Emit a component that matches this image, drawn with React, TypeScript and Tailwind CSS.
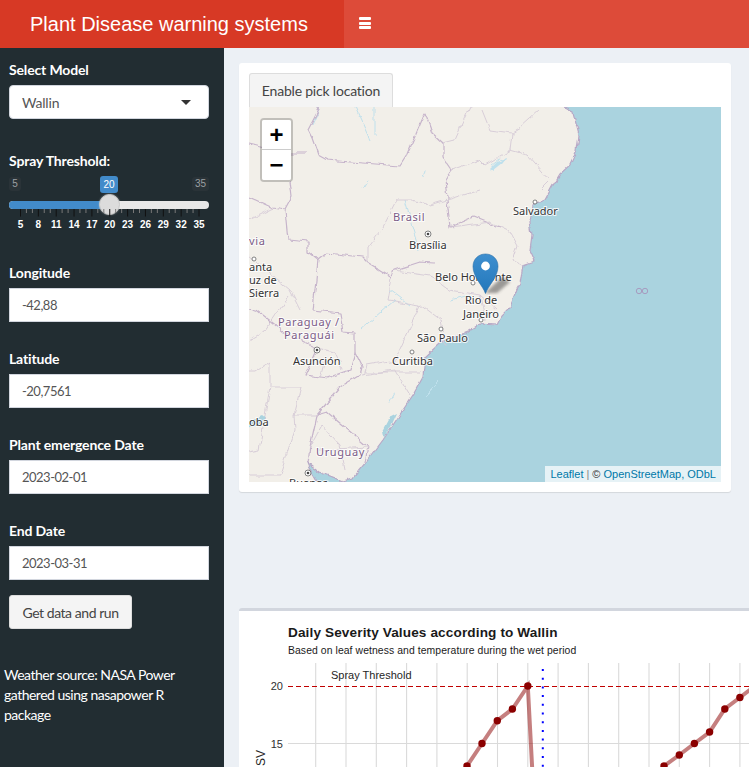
import { ReactNode } from 'react'

const FONT = "font-['Lato','Liberation_Sans',sans-serif]"

const ticks = [5, 8, 11, 14, 17, 20, 23, 26, 29, 32, 35]

function FieldLabel({ children }: { children: ReactNode }) {
  return <div className="h-5 text-[14px] leading-5 font-bold text-white tracking-[-0.15px]">{children}</div>
}

function TextField({ label, value }: { label: string; value: string }) {
  return (
    <div className="mb-[27px]">
      <FieldLabel>{label}</FieldLabel>
      <div className="mt-[5px] h-[34px] w-[200px] bg-white border border-[#d2d6de] px-3 text-[13px] leading-[32px] text-[#555] tracking-[-0.5px]">
        {value}
      </div>
    </div>
  )
}

function ThresholdSlider() {
  return (
    <div className="relative h-[74px] w-[200px] mt-[5px]">
      <span className="absolute left-0 top-[1px] h-[14px] w-3 rounded-[3px] bg-[#2a3338] text-center text-[#9a9fa2] text-[10px] leading-[14px] font-['Liberation_Sans',sans-serif]">5</span>
      <span className="absolute left-[91px] top-0 h-[17px] w-[18px] rounded-[3px] bg-[#428bca] text-white text-center text-[10px] leading-[17px] font-['Liberation_Sans',sans-serif]">20</span>
      <span className="absolute right-0 top-[1px] h-[14px] w-[17px] rounded-[3px] bg-[#2a3338] text-center text-[#9a9fa2] text-[10px] leading-[14px] font-['Liberation_Sans',sans-serif]">35</span>
      <div className="absolute left-0 top-[25px] h-2 w-full rounded-full bg-[#e8e8e8]" />
      <div className="absolute left-0 top-[25px] h-2 w-[100px] rounded-l-full bg-[#428bca]" />
      <div className="absolute left-[90px] top-[18px] h-[21px] w-[21px] rounded-full bg-[#dcdcdc] border border-[#c8c8c8] shadow-[0_0_2px_rgba(255,255,255,0.4)]" />
      <svg className="absolute left-0 top-[33px]" width="200" height="10" viewBox="0 0 200 10">
        {ticks.map((t, i) => {
          const x = 11.5 + i * 17.85
          return (
            <g key={t}>
              <rect x={x - 0.5} y="0" width="1" height="7.5" fill="#111" />
              {i < 10 && <rect x={x + 5.4} y="0" width="1" height="4" fill="#777" />}
              {i < 10 && <rect x={x + 11.4} y="0" width="1" height="4" fill="#777" />}
            </g>
          )
        })}
      </svg>
      <div className="absolute left-0 top-[43px] h-3 w-full">
        {ticks.map((t, i) => (
          <span
            key={t}
            className="absolute top-0 w-5 -ml-[10px] text-center text-[10px] leading-3 font-bold text-white font-['Liberation_Sans',sans-serif]"
            style={{ left: 11.5 + i * 17.85 }}
          >
            {t}
          </span>
        ))}
      </div>
    </div>
  )
}

function MapLabel({ x, y, children, purple }: { x: number; y: number; children: string; purple?: boolean }) {
  return (
    <text
      x={x}
      y={y}
      fontFamily="'Noto Sans', sans-serif"
      fontSize="11"
      letterSpacing={purple ? 0.6 : 0}
      fill={purple ? '#7b5c87' : '#333'}
      stroke="#fff"
      strokeOpacity="0.8"
      strokeWidth="2"
      paintOrder="stroke"
    >
      {children}
    </text>
  )
}

function City({ x, y, capital }: { x: number; y: number; capital?: boolean }) {
  return (
    <g>
      <circle cx={x} cy={y} r={capital ? 3 : 2} fill="#fff" stroke="#666" strokeWidth="0.8" />
      {capital && <circle cx={x} cy={y} r="1.3" fill="#444" />}
    </g>
  )
}

const COAST =
  'M563 107 L573 112 L579 135 L577 150 L570 165 L560 174 L552 187 L545 200 L533 205 L530 222 L532 235 L530 250 L535 261 L523 265 L520 285 L517 290 L510 307 L502 315 L497 325 L480 324 L467 332 L440 343 L425 357 L423 377 L413 395 L403 410 L383 440 L368 460 L353 478 L343 481 L320 472 L308 463 L310 468 L318 482'

function BrazilMap() {
  return (
    <svg className="block" width="472" height="375" viewBox="249 107 472 375">
      <defs>
        <filter id="wiggle" x="-5%" y="-5%" width="110%" height="110%">
          <feTurbulence type="fractalNoise" baseFrequency="0.09" numOctaves="3" seed="4" result="n" />
          <feDisplacementMap in="SourceGraphic" in2="n" scale="6" xChannelSelector="R" yChannelSelector="G" />
          <feGaussianBlur stdDeviation="0.3" />
        </filter>
        <filter id="soft">
          <feGaussianBlur stdDeviation="1.6" />
        </filter>
        <linearGradient id="pin" x1="0" y1="0" x2="0" y2="1">
          <stop offset="0" stopColor="#3f8fcf" />
          <stop offset="1" stopColor="#2277bb" />
        </linearGradient>
      </defs>
      <rect x="249" y="107" width="472" height="375" fill="#aad3df" />
      <g filter="url(#wiggle)">
        {/* land, run past the frame so the wiggle leaves no gap */}
        <path d={`M235 95 L563 95 ${COAST.slice(1)} L318 495 L235 495 Z`} fill="#f2efe9" />
        <path d={COAST} fill="none" stroke="#b7a8c6" strokeWidth="1.2" />
        {/* lakes and rivers */}
        <g fill="none" stroke="#bfe0ec" strokeWidth="1">
          <path d="M320 107 L312 125 M355 107 L370 140 M375 107 L375 135 M425 170 L423 178 M368 180 L362 190" />
          <path d="M491 165 L500 158 L507 160 M405 200 L420 250 M450 300 L470 295 M390 290 L410 305" />
          <path d="M395 392 L389 403 M250 426 L262 420 M360 330 L395 300 M440 380 L425 395" />
        </g>
        <path d="M490 168 L497 161 L506 158 L502 163 L493 170 Z" fill="#bfe0ec" />
        <path d="M384 438 L392 424 L397 413 L391 416 L383 431 Z" fill="#aad3df" />
        <path d="M245 422 L262 415 L266 418 L258 426 L245 428 Z" fill="#aad3df" />
        {/* country borders */}
        <g fill="none" stroke="#c6b4cb" strokeWidth="1.2" strokeLinejoin="round">
          <path d="M320 107 L308 130 L312 138 L318 155 L327 160 L400 166 L407 155 L425 113 L432 133 L443 143 L443 157 L452 170 L445 180 L447 200 L450 227 L473 217 L500 228" />
          <path d="M249 197 L273 208 L285 210 L288 240 L308 242 L308 252 L318 260 L327 253 L362 257 L368 263 L392 278 L395 270 L420 262 L435 263" />
          <path d="M290 180 L292 197 L285 210 M308 153 L290 153 M249 143 L290 153" />
          <path d="M258 312 L283 332 L317 348 L305 375 L328 378 L350 370 L355 353 L362 367 L360 375 L340 387 L317 415 L310 447 L308 463" />
          <path d="M317 415 L327 412 L340 423 L368 447 L365 462" />
          <path d="M313 310 L340 313 L343 332 L355 333 L355 353 M313 310 L318 260 M249 309 L258 312" />
        </g>
        {/* state borders */}
        <g fill="none" stroke="#d5cad6" strokeWidth="0.9" strokeLinejoin="round">
          <path d="M397 200 L383 227 L368 247 L368 263 M397 200 L413 200 L430 205 L447 200" />
          <path d="M249 220 L273 208 M482 110 L490 130 L512 133 L520 128 L540 110 M512 133 L510 150 L485 165 L480 160 M510 150 L528 155 L550 180 L540 190" />
          <path d="M450 227 L490 222 L510 232 L517 245 L512 260 L522 265 M452 170 L480 160 M480 190 L447 200 M470 107 L455 140 L443 143" />
          <path d="M392 278 L388 300 L420 305 L440 320 L445 345 M420 305 L395 360 L367 365 M367 365 L365 372 L420 372 M362 375 L395 370 L410 395 M395 270 L430 275 L450 290 L480 295 L497 310 M480 295 L485 320" />
          <path d="M270 362 L255 372 L249 372 M270 362 L270 387 L301 387 M270 387 L259 450 L249 452 M301 387 L294 415 L295 430 L280 475 L249 475 M294 415 L317 415" />
          <path d="M317 348 L335 352 L343 370 M325 360 L320 378 M322 425 L340 445 L345 470 M320 450 L368 447 M310 447 L322 425" />
          <path d="M249 255 L290 290 L300 310 M289 295 L265 330 L249 340" />
        </g>
      </g>
      <circle cx="639" cy="291" r="2.7" fill="none" stroke="#a79cc0" strokeWidth="1" />
      <circle cx="645" cy="291" r="2.7" fill="none" stroke="#a79cc0" strokeWidth="1" />
      {/* places */}
      <City x={428} y={234} capital />
      <City x={535} y={202} />
      <City x={473} y={283} />
      <City x={481} y={320} />
      <City x={441} y={329} />
      <City x={412} y={352} />
      <City x={317} y={350} capital />
      <City x={308} y={473} capital />
      <City x={254} y={259} />
      <MapLabel x={393} y={221} purple>Brasil</MapLabel>
      <MapLabel x={409} y={249}>Brasília</MapLabel>
      <MapLabel x={513} y={215}>Salvador</MapLabel>
      <MapLabel x={435} y={281}>Belo Horizonte</MapLabel>
      <MapLabel x={465} y={304}>Rio de</MapLabel>
      <MapLabel x={463} y={318}>Janeiro</MapLabel>
      <MapLabel x={417} y={342}>São Paulo</MapLabel>
      <MapLabel x={392} y={365}>Curitiba</MapLabel>
      <MapLabel x={293} y={365}>Asunción</MapLabel>
      <MapLabel x={278} y={326} purple>Paraguay /</MapLabel>
      <MapLabel x={284} y={339} purple>Paraguái</MapLabel>
      <MapLabel x={316} y={456} purple>Uruguay</MapLabel>
      <MapLabel x={249} y={245} purple>via</MapLabel>
      <MapLabel x={249} y={271}>anta</MapLabel>
      <MapLabel x={249} y={284}>uz de</MapLabel>
      <MapLabel x={249} y={297}>Sierra</MapLabel>
      <MapLabel x={249} y={426}>oba</MapLabel>
      <MapLabel x={289} y={487}>Buenos</MapLabel>
      {/* marker shadow */}
      <path d="M485 293 L502 277 L510 282 L497 293 Z" fill="#333" opacity="0.45" filter="url(#soft)" />
      {/* marker */}
      <path
        d="M485.5 293.5 C483 286 473 277 473 266.5 C473 259 478.5 254 485.5 254 C492.5 254 498 259 498 266.5 C498 277 488 286 485.5 293.5 Z"
        fill="url(#pin)"
        stroke="#2a6fa8"
        strokeWidth="0.6"
      />
      <circle cx="485.5" cy="266" r="4.4" fill="#fff" />
    </svg>
  )
}

function SeverityChart() {
  const gridX = [315.7, 346, 376.3, 406.6, 436.9, 467.2, 497.5, 527.8, 558.1, 588.4, 618.7, 649, 679.3, 709.6, 739.9]
  const left: [number, number][] = [[452, 790], [467, 766], [482, 743.5], [497.3, 720.7], [512.4, 709], [527.8, 686], [542.8, 968]]
  const right: [number, number][] = [[649, 790], [664, 766], [679.3, 755], [694.4, 743.5], [709.6, 732], [724.8, 709], [739.9, 697.5], [755, 686]]
  const toLine = (pts: [number, number][]) => pts.map(p => p.join(',')).join(' ')
  return (
    <svg className="block" width="510" height="156" viewBox="239 611 510 156">
      <g fontFamily="'Liberation Sans', sans-serif">
        <text x="288" y="637" fontSize="13.6" fontWeight="700" fill="#1a1a1a" letterSpacing="0.12">Daily Severity Values according to Wallin</text>
        <text x="288" y="654" fontSize="10.4" fill="#1a1a1a" letterSpacing="0.08">Based on leaf wetness and temperature during the wet period</text>
        {gridX.map(x => (
          <line key={x} x1={x} x2={x} y1="663" y2="767" stroke="#dadada" strokeWidth="1.1" />
        ))}
        <line x1="288" x2="749" y1="743.5" y2="743.5" stroke="#dadada" strokeWidth="1.1" />
        <text x="331" y="679" fontSize="11" fill="#262626">Spray Threshold</text>
        <text x="283" y="690" fontSize="11" fill="#303030" textAnchor="end">20</text>
        <text x="283" y="747.5" fontSize="11" fill="#303030" textAnchor="end">15</text>
        <text transform="translate(265 766) rotate(-90)" fontSize="12" fill="#262626">SV</text>
        <polyline points={toLine(left)} fill="none" stroke="#8b0000" strokeOpacity="0.5" strokeWidth="4" />
        <polyline points={toLine(right)} fill="none" stroke="#8b0000" strokeOpacity="0.5" strokeWidth="4" />
        <line x1="288" x2="749" y1="686.5" y2="686.5" stroke="#c00000" strokeWidth="1" strokeDasharray="5 3" />
        <line x1="542.8" x2="542.8" y1="669" y2="767" stroke="#0000ff" strokeWidth="2" strokeDasharray="2 6.7" />
        {left.concat(right).map(([x, y]) => (
          <circle key={`${x}-${y}`} cx={x} cy={y} r="3.7" fill="#8b0000" />
        ))}
      </g>
    </svg>
  )
}

export default function App() {
  return (
    <div className={`h-[767px] w-[749px] overflow-hidden bg-[#ecf0f5] ${FONT}`}>
      <header className="flex h-12">
        <div className="flex h-12 w-[344px] items-center bg-[#d73925] pl-[30px] text-[20px] text-white font-['Liberation_Sans',sans-serif]">
          Plant Disease warning systems
        </div>
        <div className="flex h-12 flex-1 items-center bg-[#dd4b39] pl-[15px]">
          <div className="mb-[2px] flex w-[12px] flex-col gap-[1.5px]">
            <span className="h-[3px] rounded-[1px] bg-white" />
            <span className="h-[3px] rounded-[1px] bg-white" />
            <span className="h-[3px] rounded-[1px] bg-white" />
          </div>
        </div>
      </header>

      <div className="flex h-[719px]">
        <aside className="w-[224px] shrink-0 bg-[#222d32] pl-[9px] pt-3">
          <FieldLabel>Select Model</FieldLabel>
          <div className="mt-[5px] flex h-[34px] w-[200px] items-center justify-between rounded-[4px] border border-[#d2d6de] bg-white pl-3 pr-[17px] text-[14px] text-[#555] tracking-[-0.2px]">
            <span>Wallin</span>
            <span className="h-0 w-0 border-x-[5px] border-t-[5px] border-x-transparent border-t-[#333]" />
          </div>

          <div className="mt-8">
            <FieldLabel>Spray Threshold:</FieldLabel>
            <ThresholdSlider />
          </div>

          <div className="mt-[13px]">
            <TextField label="Longitude" value="-42,88" />
            <TextField label="Latitude" value="-20,7561" />
            <TextField label="Plant emergence Date" value="2023-02-01" />
            <TextField label="End Date" value="2023-03-31" />
          </div>

          <div className="mt-[-12px] flex h-[34px] w-[123px] items-center justify-center rounded-[3px] border border-[#ddd] bg-[#f4f4f4] text-[14px] text-[#444] tracking-[-0.45px]">
            Get data and run
          </div>

          <p className="-ml-[5px] mt-[36px] w-[190px] text-[14px] leading-5 text-white tracking-[-0.5px]">
            Weather source: NASA Power gathered using nasapower R package
          </p>
        </aside>

        <main className="flex-1 overflow-hidden pl-[15px] pt-[15px]">
          <section className="w-[492px] rounded-[3px] bg-white p-[10px] shadow-[0_1px_1px_rgba(0,0,0,0.1)]">
            <div className="flex h-[34px] w-[144px] items-center justify-center rounded-t-[3px] border border-b-0 border-[#ddd] bg-[#f4f4f4] text-[14px] text-[#444] tracking-[-0.2px]">
              Enable pick location
            </div>
            <div className="relative h-[375px] w-[472px] overflow-hidden">
              <BrazilMap />
              <div className="absolute left-[11px] top-[11px] w-[33px] rounded-[4px] border-2 border-black/20 bg-clip-padding">
                <div className="flex h-[30px] items-center justify-center rounded-t-[2px] border-b border-[#ccc] bg-white text-[24px] font-bold text-black font-['Liberation_Sans',sans-serif]">+</div>
                <div className="flex h-[30px] items-center justify-center rounded-b-[2px] bg-white text-[24px] font-bold text-black font-['Liberation_Sans',sans-serif]">−</div>
              </div>
              <div className="absolute bottom-0 right-0 flex h-4 items-center bg-white/70 px-[5px] text-[11px] text-[#333] font-['Liberation_Sans',sans-serif]">
                <span className="text-[#0078a8]">Leaflet</span>
                <span className="mx-[3px] text-[#888]">|</span>
                <span>©&nbsp;</span>
                <span className="text-[#0078a8]">OpenStreetMap, ODbL</span>
              </div>
            </div>
          </section>

          <section className="mt-[116px] w-[520px] border-t-[3px] border-[#d2d6de] bg-white rounded-t-[3px]">
            <SeverityChart />
          </section>
        </main>
      </div>
    </div>
  )
}
